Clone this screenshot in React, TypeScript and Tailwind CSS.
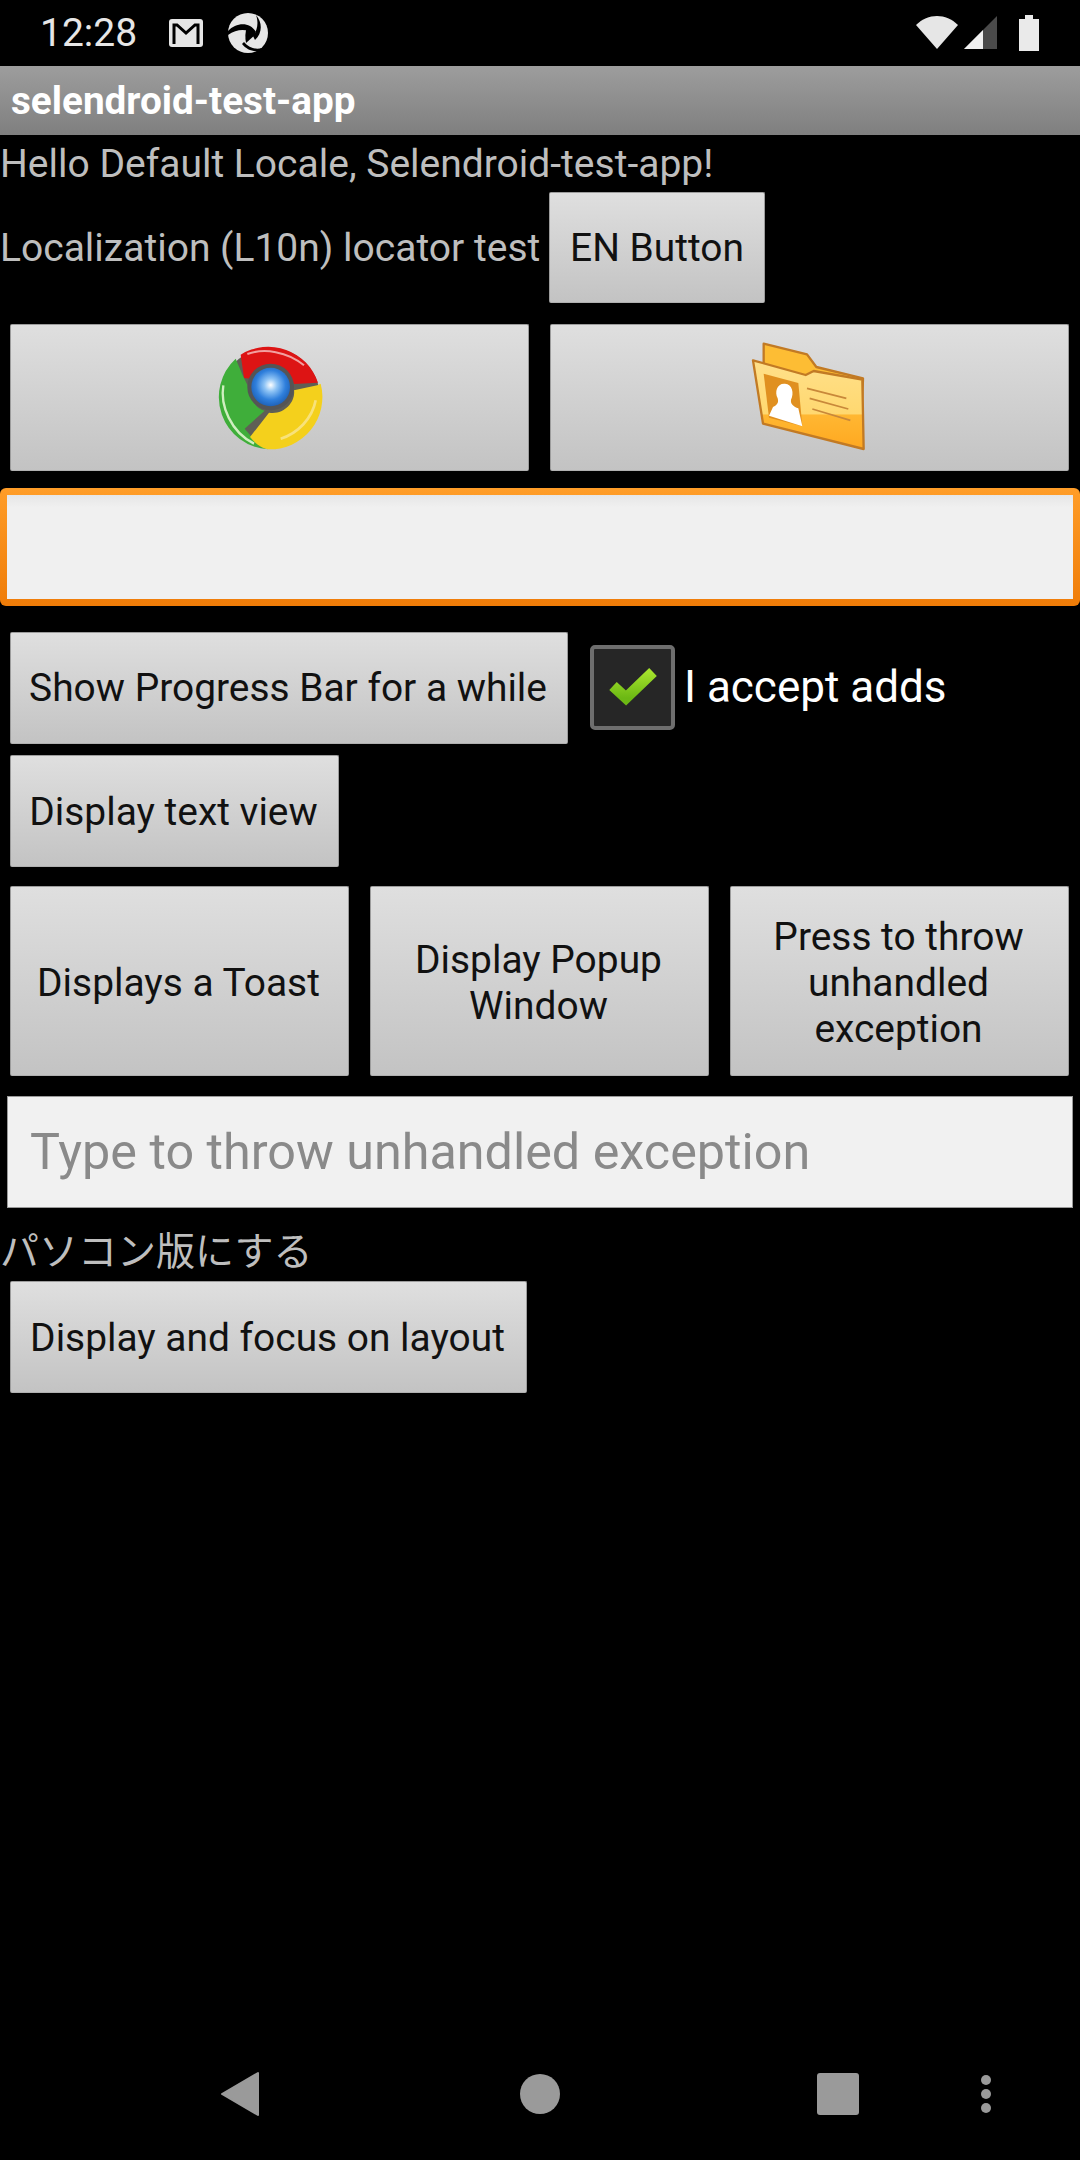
import type { ReactNode } from "react";

const btn =
  "flex items-center justify-center text-center text-[#111] text-[38.9px] leading-[46px] rounded-[2px] border border-[#9c9c9c] border-b-[#b0b0b0] bg-[linear-gradient(#dfdfdf,#c3c3c3)]";

function Btn({ className, children }: { className: string; children: ReactNode }) {
  return <div className={`${btn} ${className}`}>{children}</div>;
}

function ChromeIcon() {
  return (
    <svg width="112" height="106" viewBox="100 70 336 316">
      <defs>
        <radialGradient id="blue" cx="50%" cy="45%" r="55%">
          <stop offset="0" stopColor="#ffffff" />
          <stop offset="0.3" stopColor="#8fc4f5" />
          <stop offset="0.7" stopColor="#2f7fdc" />
          <stop offset="1" stopColor="#1f62b8" />
        </radialGradient>
      </defs>
      <circle cx="268" cy="228" r="150" fill="#5f5f55" />
      <path d="M180 98A157 157 0 0 1 412 182L340 186C315 135 240 130 212 170L190 168Z" fill="#dd1414" />
      <path d="M200 96C250 78 320 88 370 130" fill="none" stroke="#f2a0a0" strokeWidth="6" />
      <path d="M165 110L186 160L208 205C212 240 230 262 252 266L192 320L236 372L262 382A157 157 0 0 1 165 110Z" fill="#3fae3a" />
      <path d="M128 190C118 250 150 330 220 365" fill="none" stroke="#cfeec0" strokeWidth="7" />
      <path d="M420 185A157 157 0 0 1 262 382C240 378 222 362 208 345L265 272C310 280 345 240 340 205L410 190Z" fill="#f4d01c" />
      <path d="M300 350C350 335 395 290 405 235" fill="none" stroke="#f8e27a" strokeWidth="8" />
      <circle cx="270" cy="195" r="70" fill="#555" />
      <circle cx="270" cy="195" r="58" fill="url(#blue)" />
    </svg>
  );
}

function FolderIcon() {
  return (
    <svg width="116" height="110" viewBox="92 60 346 330" className="mr-[3px] mb-[4px]">
      <defs>
        <linearGradient id="front" x1="0" y1="0" x2="0" y2="1">
          <stop offset="0" stopColor="#ffe08a" />
          <stop offset="0.6" stopColor="#ffd870" />
          <stop offset="0.62" stopColor="#ffb732" />
          <stop offset="1" stopColor="#ffa820" />
        </linearGradient>
      </defs>
      <path d="M132 68L262 100L290 138L430 172L425 300L132 200Z" fill="#fdbd34" stroke="#c27a24" strokeWidth="7" strokeLinejoin="round" />
      <path d="M100 118L258 162L282 150L428 176L432 384L130 308Z" fill="url(#front)" stroke="#c27a24" strokeWidth="7" strokeLinejoin="round" />
      <path d="M132 158L236 186L248 316L148 290Z" fill="#e09020" />
      <path d="M148 284L160 258C172 252 178 246 174 232C164 212 172 186 196 188C218 190 224 216 214 236C212 250 222 256 236 262L248 316Z" fill="#ffffff" />
      <path d="M262 202L380 232M270 232L386 264M278 264L392 298" stroke="#c9883a" strokeWidth="5" fill="none" />
    </svg>
  );
}

export default function App() {
  return (
    <div className="w-[1080px] h-[2160px] bg-black flex flex-col font-['Roboto',sans-serif] overflow-hidden">
      {/* status bar */}
      <div className="h-[66px] flex items-center text-[#e6e6e6] pl-[40px] pr-[41px]">
        <span className="text-[39px] leading-none w-[129px]">12:28</span>
        <svg width="34" height="28" viewBox="0 0 34 28" className="mr-[24px]">
          <rect width="34" height="28" rx="3" fill="#e6e6e6" />
          <path d="M5 25V6h3l9 8 9-8h3v19" fill="none" stroke="#000" strokeWidth="3" />
        </svg>
        <svg width="42" height="42" viewBox="0 0 42 42">
          <circle cx="21" cy="21" r="20" fill="#e6e6e6" />
          <path d="M1 19C9 11 22 9 29 20L26 23C21 16 10 17 1 23Z" fill="#000" />
          <path d="M29 3C36 11 35 22 28 28L26 24C30 19 32 11 29 3Z" fill="#000" />
          <path d="M17 30C22 36 29 38 35 36L32 39C25 40 19 37 15 32Z" fill="#000" />
          <path d="M20 15L29 22L19 31C18 26 18 20 20 15Z" fill="#000" />
        </svg>
        <div className="ml-auto flex items-center">
          <svg width="42" height="34" viewBox="0 0 42 34" className="mr-[6px]">
            <path d="M0 9C12 -3 30 -3 42 9L21 33Z" fill="#e6e6e6" />
          </svg>
          <svg width="34" height="34" viewBox="0 0 34 34" className="mr-[21px]">
            <path d="M0 33L33 0V33Z" fill="#4a4a4a" />
            <path d="M0 33L19 14V33Z" fill="#f0f0f0" />
          </svg>
          <svg width="20" height="36" viewBox="0 0 20 36">
            <path d="M6 0h8v4h6v32H0V4h6Z" fill="#eaeaea" />
          </svg>
        </div>
      </div>

      {/* action bar */}
      <div className="h-[69px] flex items-center pl-[11px] bg-[linear-gradient(#9d9d9d,#7f7f7f)]">
        <span className="text-white font-bold text-[38.7px] leading-none pt-[2px]">selendroid-test-app</span>
      </div>

      <div className="flex flex-col text-[#bebebe] text-[39px]">
        <div className="h-[58px] flex items-center">Hello Default Locale, Selendroid-test-app!</div>

        <div className="flex items-center h-[111px] mt-[-1px]">
          <span className="w-[549px] pt-[2px]">Localization (L10n) locator test</span>
          <Btn className="w-[216px] h-[111px] pt-[1px]">EN Button</Btn>
        </div>

        <div className="flex gap-[21px] px-[10px] mt-[21px]">
          <Btn className="w-[519px] h-[147px]"><ChromeIcon /></Btn>
          <Btn className="w-[519px] h-[147px]"><FolderIcon /></Btn>
        </div>

        <div className="h-[118px] mt-[17px] rounded-[6px] p-[7px] bg-[linear-gradient(#ff9d28,#ef7c08)]">
          <div className="h-full bg-[linear-gradient(#e6e6e6,#f0f0f0_12%)]" />
        </div>

        <div className="flex items-center h-[112px] mt-[26px] pl-[10px]">
          <Btn className="w-[558px] h-[112px] pr-[2px]">Show Progress Bar for a while</Btn>
          <div className="w-[85px] h-[85px] ml-[22px] mb-[2px] rounded-[5px] border-[4px] border-[#6e6e6e] bg-[#262626] flex items-center justify-center">
            <svg width="52" height="42" viewBox="0 0 52 42">
              <defs>
                <linearGradient id="tick" x1="0" y1="0" x2="0" y2="1">
                  <stop offset="0" stopColor="#a4e22c" />
                  <stop offset="1" stopColor="#6cb814" />
                </linearGradient>
              </defs>
              <path d="M6 20L19 32L46 6" fill="none" stroke="url(#tick)" strokeWidth="11" />
            </svg>
          </div>
          <span className="ml-[9px] mb-[2px] text-white text-[44px]">I accept adds</span>
        </div>

        <div className="pl-[10px] mt-[11px]">
          <Btn className="w-[329px] h-[112px] pr-[2px] pt-[1px]">Display text view</Btn>
        </div>

        <div className="flex gap-[21px] px-[10px] mt-[19px]">
          <Btn className="w-[339px] h-[190px] pt-[3px] pr-[2px]">Displays a Toast</Btn>
          <Btn className="w-[339px] h-[190px] pl-[20px] pr-[22px] pt-[3px]">Display Popup Window</Btn>
          <Btn className="w-[339px] h-[190px] pl-[20px] pr-[22px] pt-[3px]">Press to throw unhandled exception</Btn>
        </div>

        <div className="mx-[7px] mt-[20px] h-[112px] bg-[#f1f1f1] border border-[#999999] flex items-center pl-[22px] text-[#8a8a8a] text-[50.3px]">
          Type to throw unhandled exception
        </div>

        <div className="h-[42px] mt-[23px] flex items-center font-['Roboto','Noto_Sans_CJK_JP',sans-serif]">パソコン版にする</div>

        <div className="pl-[10px] mt-[8px]">
          <Btn className="w-[517px] h-[112px] pr-[2px] pt-[1px]">Display and focus on layout</Btn>
        </div>
      </div>

      {/* nav bar */}
      <div className="mt-auto h-[126px] flex items-center pl-[220px] pb-[6px]">
        <svg width="40" height="46" viewBox="0 0 40 46">
          <path d="M38 2V44L2 23Z" fill="#9a9a9a" stroke="#9a9a9a" strokeWidth="2" strokeLinejoin="round" />
        </svg>
        <div className="w-[40px] h-[40px] rounded-full bg-[#9a9a9a] ml-[260px]" />
        <div className="w-[42px] h-[42px] rounded-[3px] bg-[#9a9a9a] ml-[257px]" />
        <div className="flex flex-col gap-[4px] ml-[122px]">
          <div className="w-[10px] h-[10px] rounded-full bg-[#9a9a9a]" />
          <div className="w-[10px] h-[10px] rounded-full bg-[#9a9a9a]" />
          <div className="w-[10px] h-[10px] rounded-full bg-[#9a9a9a]" />
        </div>
      </div>
    </div>
  );
}
